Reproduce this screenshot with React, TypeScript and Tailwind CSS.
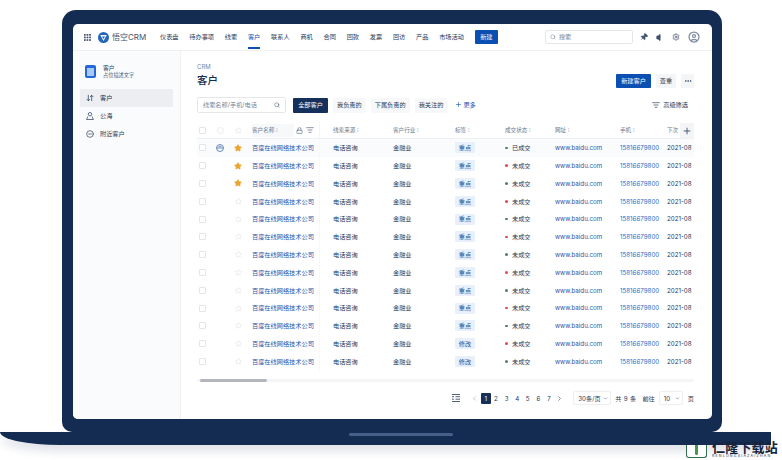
import { ArrowDownUp, ChevronLeft, ChevronRight, ChevronDown, CircleUser, ListFilter, Lock, MoreHorizontal, Pin, Plus, Search, Settings, Star, Volume, CircleMinus } from 'lucide-react';

const navItems = ['仪表盘', '待办事项', '线索', '客户', '联系人', '商机', '合同', '回款', '发票', '回访', '产品', '市场活动'];
const tabs = ['全部客户', '我负责的', '下属负责的', '我关注的'];
const cols = 'grid grid-cols-[10px_26px_10px_77px_73px_62px_50px_50px_65px_47px_27px] items-center';

const rows = Array.from({ length: 13 }, (_, i) => ({
    status: i === 0 ? '已成交' : '未成交',
    won: i % 2 === 0,
    starred: i < 3,
    tag: i > 10 ? '修改' : '重点',
}));

function Box() {
    return <span className="block w-[7px] h-[7px] rounded-[1px] border border-[#e3e6ea] bg-white" />;
}

function HeadLabel({ text }: { text: string }) {
    return <span className="text-[#6b778c] text-[5.6px]">{text} ⁝</span>;
}

export default function App() {
    return (
        <div className="relative w-[782px] h-[460px] overflow-hidden bg-white pt-[10px] font-['Inter','Noto_Sans_CJK_SC',sans-serif] text-[6.2px] text-[#253858]">
            {/* Laptop lid */}
            <div className="relative z-10 ml-[62px] w-[660px] h-[422px] rounded-t-[14px] rounded-b-[10px] bg-[#142c52] pl-[11px] pr-[10px] pt-[14px]">
                <div className="flex flex-col h-[395px] rounded-t-[5px] rounded-b-[5px] bg-white overflow-hidden">
                    {/* Top nav */}
                    <header className="flex items-center h-[27px] shrink-0 border-b border-[#eef0f2] pl-[11px]">
                        <svg width="7" height="7" viewBox="0 0 7 7" className="mr-[7px] fill-[#42526e]">
                            {[0, 2.6, 5.2].flatMap((y) =>
                                [0, 2.6, 5.2].map((x) => <rect key={`${x}-${y}`} x={x} y={y} width="1.7" height="1.7" />)
                            )}
                        </svg>
                        <svg width="11" height="11" viewBox="0 0 11 11" className="mr-[3px]">
                            <circle cx="5.5" cy="5.5" r="5.5" fill="#2467b8" />
                            <path d="M2.2 3h6.6L5.5 9z" fill="#f2f7fd" />
                            <path d="M4 4.4h3L5.5 7z" fill="#2467b8" />
                        </svg>
                        <span className="text-[8px] text-[#44546f] w-[48px]">悟空CRM</span>
                        <nav className="flex items-center gap-[10.75px] h-full">
                            {navItems.map((item) => (
                                <span
                                    key={item}
                                    className={
                                        item === '客户'
                                            ? 'relative flex items-center h-full text-[#0b4fb3]'
                                            : 'flex items-center h-full'
                                    }
                                >
                                    {item}
                                    {item === '客户' && (
                                        <span className="absolute left-0 right-0 bottom-[1px] h-[2px] bg-[#0b4fb3]" />
                                    )}
                                </span>
                            ))}
                        </nav>
                        <button className="ml-[11px] w-[23px] h-[14px] rounded-[1px] bg-[#0b4fb3] text-white text-[6.2px]">新建</button>
                        <div className="ml-[47px] flex items-center gap-[3px] w-[88px] h-[14px] pl-[4px] rounded-[2px] border border-[#e4e6ea] text-[#7a869a]">
                            <Search size={6} />
                            <span>搜索</span>
                        </div>
                        <div className="flex items-center ml-[7px] text-[#42526e]">
                            <Pin size={8} className="rotate-45 fill-current" />
                            <Volume size={9} className="ml-[8px] fill-current" />
                            <Settings size={8} className="ml-[7px]" />
                            <CircleUser size={12} strokeWidth={2.5} className="ml-[8px] text-[#7f8ea3]" />
                        </div>
                    </header>

                    <div className="flex flex-1 min-h-0">
                        {/* Sidebar */}
                        <aside className="w-[108px] shrink-0 bg-[#fafbfc] border-r border-[#f0f1f3] px-[7px]">
                            <div className="flex items-center h-[38px] pt-[3px] pl-[5px] gap-[7px]">
                                <span className="flex items-center justify-center w-[11px] h-[13px] rounded-[2px] bg-[#2468d8]">
                                    <span className="w-[7px] h-[8px] bg-[#a9c9f5]" />
                                </span>
                                <div className="flex flex-col leading-[7.5px]">
                                    <span className="text-[5.8px]">客户</span>
                                    <span className="text-[5.2px] text-[#505f79]">占位描述文字</span>
                                </div>
                            </div>
                            <div className="flex items-center h-[18px] pl-[6px] gap-[6px] rounded-[1px] bg-[#eceef1] text-[#0f2a52]">
                                <ArrowDownUp size={8} />
                                <span>客户</span>
                            </div>
                            <div className="flex items-center h-[18px] pl-[6px] gap-[6px]">
                                <svg width="8" height="8" viewBox="0 0 8 8" fill="none" stroke="currentColor" strokeWidth="0.7">
                                    <circle cx="4" cy="2.2" r="1.7" />
                                    <path d="M1.8 4.6.6 7.5h6.8L6.2 4.6" />
                                </svg>
                                <span>公海</span>
                            </div>
                            <div className="flex items-center h-[18px] pl-[6px] gap-[6px]">
                                <CircleMinus size={8} />
                                <span>附近客户</span>
                            </div>
                        </aside>

                        {/* Main */}
                        <main className="flex-1 min-w-0 pl-[16px] pr-[18px] pt-[12px]">
                            <div className="text-[#7a869a] text-[6px] leading-[8px]">CRM</div>
                            <div className="flex items-center h-[14px] mt-[3px]">
                                <h1 className="text-[10.5px] font-medium text-[#172b4d]">客户</h1>
                                <div className="ml-auto flex items-center">
                                    <button className="w-[35px] h-[14px] rounded-[1px] bg-[#0b4fb3] text-white text-[6.2px]">新建客户</button>
                                    <button className="ml-[5px] w-[20px] h-[14px] rounded-[1px] bg-[#f4f5f7] text-[6.2px]">查重</button>
                                    <button className="ml-[5px] flex items-center justify-center w-[13px] h-[14px] rounded-[1px] bg-[#f4f5f7]">
                                        <MoreHorizontal size={8} />
                                    </button>
                                </div>
                            </div>

                            {/* Toolbar */}
                            <div className="flex items-center h-[16px] mt-[9px]">
                                <div className="flex items-center justify-between w-[89px] h-[16px] px-[5px] rounded-[2px] border border-[#e4e6ea] text-[#7a869a]">
                                    <span>线索名称/手机/电话</span>
                                    <Search size={6} className="text-[#42526e]" />
                                </div>
                                <div className="flex items-center ml-[7px] gap-[5px]">
                                    {tabs.map((tab, i) => (
                                        <span
                                            key={tab}
                                            className={
                                                i === 0
                                                    ? 'flex items-center justify-center w-[35px] h-[15px] rounded-[1px] bg-[#15305a] text-white'
                                                    : 'flex items-center justify-center px-[4px] h-[15px] rounded-[1px] bg-[#f7f8f9]'
                                            }
                                        >
                                            {tab}
                                        </span>
                                    ))}
                                </div>
                                <span className="ml-[8px] flex items-center gap-[1px] text-[#0b4fb3]">
                                    <Plus size={7} />
                                    更多
                                </span>
                                <span className="ml-auto flex items-center gap-[3px] mr-[6px]">
                                    <ListFilter size={8} />
                                    高级筛选
                                </span>
                            </div>

                            {/* Table */}
                            <div className="relative mt-[9px]">
                                <div className={`${cols} h-[17px] border-b border-[#eef0f2]`}>
                                    <span className="flex justify-center"><Box /></span>
                                    <span className="flex justify-center"><span className="block w-[7px] h-[7px] rounded-full border border-[#e9ebee]" /></span>
                                    <span className="flex justify-center"><Star size={7} className="text-[#dfe2e6]" /></span>
                                    <div className="flex items-center h-full pl-[9px] border-r border-[#f4f5f7]">
                                        <span className="flex items-center w-[42px] h-[13px] bg-[#f7f8f9]">
                                            <HeadLabel text="客户名称" />
                                        </span>
                                        <Lock size={7} className="ml-[2px] text-[#505f79]" />
                                        <ListFilter size={8} className="ml-[3px] text-[#505f79]" />
                                    </div>
                                    <span className="pl-[13px]"><HeadLabel text="线索来源" /></span>
                                    <span><HeadLabel text="客户行业" /></span>
                                    <span><HeadLabel text="标签" /></span>
                                    <span><HeadLabel text="成交状态" /></span>
                                    <span><HeadLabel text="网址" /></span>
                                    <span><HeadLabel text="手机" /></span>
                                    <span className="text-[#6b778c] text-[5.6px]">下次</span>
                                </div>
                                {rows.map((row, i) => (
                                    <div key={i} className={`${cols} h-[17.8px] ${i === 0 ? 'bg-[#fafbfd]' : ''}`}>
                                        <span className="flex justify-center"><Box /></span>
                                        <span className="flex justify-center">
                                            {i === 0 && (
                                                <svg width="8" height="8" viewBox="0 0 8 8" fill="none" stroke="#2b5c9e" strokeWidth="0.7">
                                                    <circle cx="4" cy="4" r="3.5" />
                                                    <path d="M1 4h6M2.6 2.6c.9-.4 1.9-.4 2.8 0" />
                                                </svg>
                                            )}
                                        </span>
                                        <span className="flex justify-center">
                                            {row.starred ? (
                                                <Star size={8} className="text-[#eba52c] fill-[#eba52c]" />
                                            ) : (
                                                <Star size={7} className="text-[#dfe2e6]" />
                                            )}
                                        </span>
                                        <span className="flex items-center h-full pl-[9px] text-[#1d56a8] whitespace-nowrap border-r border-[#f7f8f9]">百度在线网络技术公司</span>
                                        <span className="pl-[13px]">电话咨询</span>
                                        <span>金融业</span>
                                        <span className="flex items-center justify-center w-[20px] h-[11px] rounded-[1px] bg-[#e7f0fb] text-[#1d4f91]">{row.tag}</span>
                                        <span className="flex items-center gap-[4.5px]">
                                            <span className={row.won ? 'w-[2.5px] h-[2.5px] rounded-full bg-[#4f7f6a]' : 'w-[2.5px] h-[2.5px] rounded-full bg-[#e0484d]'} />
                                            {row.status}
                                        </span>
                                        <span className="text-[#1d56a8]">www.baidu.com</span>
                                        <span className="text-[#2b6cc4]">15816679800</span>
                                        <span className="whitespace-nowrap">2021-08</span>
                                    </div>
                                ))}
                                {/* Add column */}
                                <button className="absolute right-0 top-[1px] flex items-center justify-center w-[14px] h-[15px] bg-[#f4f5f7] text-[#344563]">
                                    <Plus size={10} />
                                </button>
                            </div>

                            {/* Scrollbar */}
                            <div className="mt-[9px] h-[3px] rounded-full bg-[#f4f5f7]">
                                <div className="ml-[3px] w-[67px] h-[3px] rounded-full bg-[#b3b7bc]" />
                            </div>

                            {/* Pagination */}
                            <div className="flex items-center justify-end h-[14px] mt-[9px]">
                                <svg width="8" height="8" viewBox="0 0 8 8" fill="none" stroke="currentColor" strokeWidth="0.8" className="mr-[11px]">
                                    <path d="M0 .5h8M0 7.5h8M0 2.7h2M0 5.2h2M3.5 2.7H8M3.5 5.2H8" />
                                </svg>
                                <ChevronLeft size={7} className="mr-[3px] text-[#97a0af]" />
                                <span className="flex items-center justify-center w-[10px] h-[11px] rounded-[1px] bg-[#15305a] text-white">1</span>
                                {[2, 3, 4, 5, 6, 7].map((n) => (
                                    <span key={n} className="w-[10.6px] text-center">{n}</span>
                                ))}
                                <ChevronRight size={7} className="ml-[2px]" />
                                <div className="ml-[10px] flex items-center justify-between w-[38px] h-[14px] pl-[4px] pr-[2px] rounded-[2px] border border-[#eceef1]">
                                    <span>30条/页</span>
                                    <ChevronDown size={5} />
                                </div>
                                <span className="ml-[4px] tracking-[0.3px]">共 9 条</span>
                                <span className="ml-[6px]">前往</span>
                                <div className="ml-[4px] flex items-center justify-between w-[24px] h-[14px] pl-[4px] pr-[2px] rounded-[2px] border border-[#eceef1]">
                                    <span>10</span>
                                    <ChevronDown size={5} />
                                </div>
                                <span className="ml-[5px]">页</span>
                            </div>
                        </main>
                    </div>
                </div>
            </div>

            {/* Laptop base */}
            <div className="flex justify-center w-[771px] h-[13px] rounded-bl-[60px_13px] bg-[#142c52] pt-[1px] pl-[30px] shadow-[0_6px_10px_rgba(20,44,82,0.14)]">
                <span className="w-[104px] h-[3px] rounded-full bg-[#46608a]" />
            </div>

            {/* Watermark */}
            <div className="absolute left-[686px] top-[445px] z-20 flex items-start gap-[5px]">
                <span className="flex justify-center w-[21px] h-[13px] rounded-b-[3px] border border-t-0 border-[#2e6b4f] bg-white">
                    <span className="w-[3px] h-[10px] rounded-b-full bg-[#3f9a4a]" />
                </span>
                <div className="flex flex-col -mt-[5px] leading-none">
                    <span className="font-bold text-[#15233b] text-[13px] tracking-[0.2px] leading-[14px]">仁隆下载站</span>
                    <span className="text-[#333] text-[3.6px] tracking-[1.2px] mt-[1px]">RENLONGXIAZAIZHAN</span>
                </div>
            </div>
        </div>
    );
}
